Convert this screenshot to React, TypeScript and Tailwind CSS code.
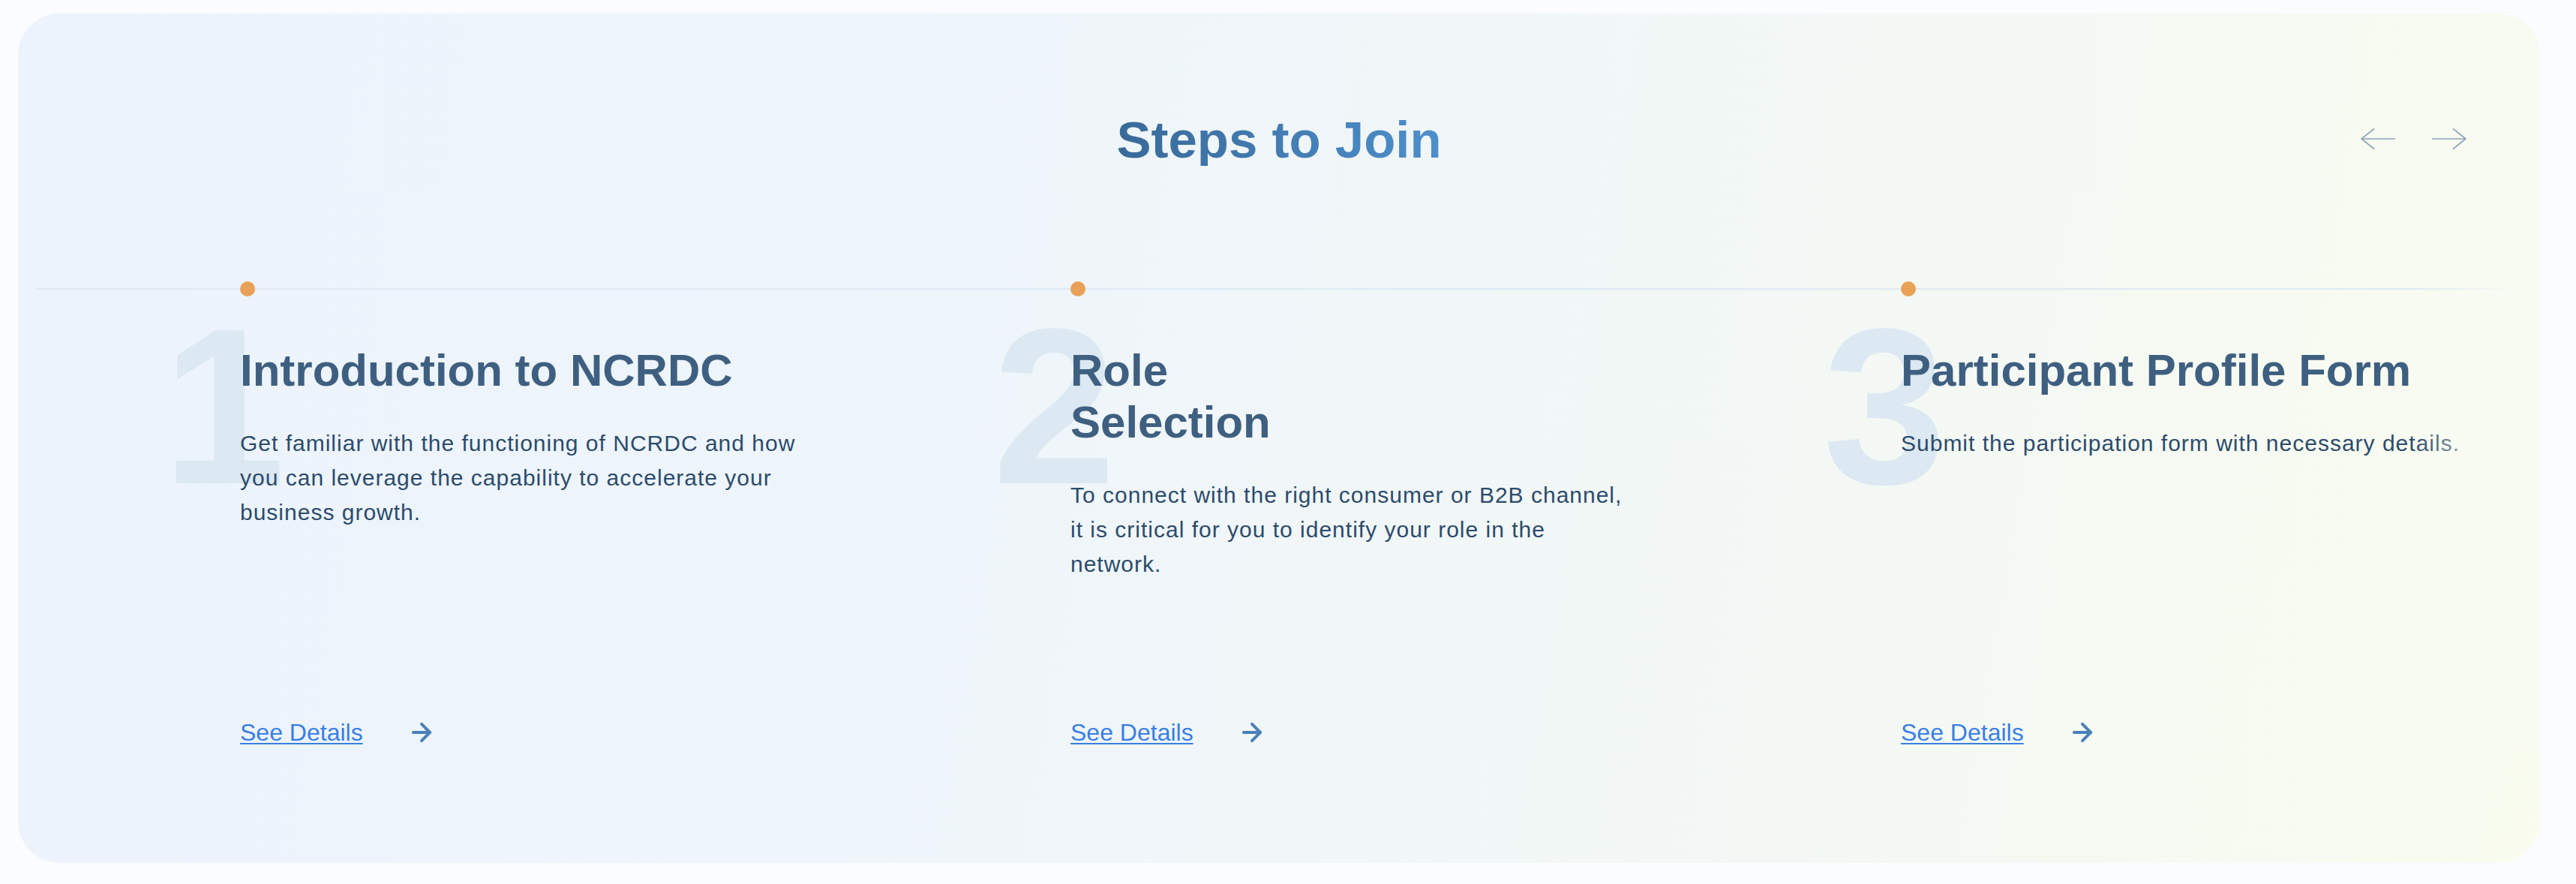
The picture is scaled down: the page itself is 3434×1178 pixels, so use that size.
import React from "react";
import { ArrowRight } from "lucide-react";

type Step = { n: string; title: React.ReactNode; body: string };

const steps: Step[] = [
  {
    n: "1",
    title: <>Introduction to NCRDC</>,
    body: "Get familiar with the functioning of NCRDC and how you can leverage the capability to accelerate your business growth.",
  },
  {
    n: "2",
    title: (
      <>
        Role
        <br />
        Selection
      </>
    ),
    body: "To connect with the right consumer or B2B channel, it is critical for you to identify your role in the network.",
  },
  {
    n: "3",
    title: <>Participant Profile Form</>,
    body: "Submit the participation form with necessary details.",
  },
];

function NavArrow({ dir }: { dir: "left" | "right" }) {
  return (
    <svg width="48" height="30" viewBox="0 0 48 30" fill="none" stroke="#8fa4b8" strokeWidth="1.6">
      {dir === "left" ? (
        <path d="M47 15H2 M19 1.5 L2 15 L19 28.5" />
      ) : (
        <path d="M1 15H46 M29 1.5 L46 15 L29 28.5" />
      )}
    </svg>
  );
}

function StepColumn({ step }: { step: Step }) {
  return (
    <div className="relative flex h-[620px] w-[1107px] shrink-0 flex-col">
      <div className="pointer-events-none absolute left-[-104px] top-[19px] select-none text-[296px] font-bold leading-none text-[#dce8f2]">
        {step.n}
      </div>
      <div className="relative h-5 w-5 rounded-full bg-[#e8a157]" />
      <h3 className="relative mt-[64px] text-[60px] font-bold leading-[69px] text-[#3e5f80]">
        {step.title}
      </h3>
      <p className="relative mt-[40px] max-w-[750px] text-[30px] leading-[46px] tracking-[1px] text-[#2c4b6c]">
        {step.body}
      </p>
      <div className="relative mt-auto flex items-center">
        <a
          href="#"
          className="text-[32px] leading-[1.2] text-[#3a7ee6] underline decoration-[2px] underline-offset-[3px]"
        >
          See Details
        </a>
        <ArrowRight size={38} strokeWidth={2.5} color="#4a80b8" className="ml-[59px]" />
      </div>
    </div>
  );
}

export default function App() {
  return (
    <div className="min-h-screen w-full bg-[#fafcff] pb-[28px] pl-[24px] pr-[48px] pt-[18px] font-['Liberation_Sans',Arial,sans-serif]">
      <div className="relative flex h-[1132px] flex-col overflow-hidden rounded-[56px] bg-[linear-gradient(100deg,#ecf3fd_0%,#eef5fb_35%,#f3f8f5_70%,#f9fcef_100%)]">
        <div className="relative flex justify-center pt-[134px]">
          <h2 className="bg-linear-to-r from-[#386a99] to-[#4e8fcc] bg-clip-text text-[69px] font-bold leading-none text-transparent">
            Steps to Join
          </h2>
          <div className="absolute right-[97px] top-[152px] flex items-center gap-[47px]">
            <button type="button" aria-label="Previous">
              <NavArrow dir="left" />
            </button>
            <button type="button" aria-label="Next">
              <NavArrow dir="right" />
            </button>
          </div>
        </div>

        <div className="relative mt-[154px] flex pl-[296px]">
          <div className="absolute left-[24px] right-0 top-[9px] h-[2px] bg-[#dde9f3]" />
          {steps.map((s) => (
            <StepColumn key={s.n} step={s} />
          ))}
          <div className="pointer-events-none absolute inset-y-0 right-0 z-20 w-[170px] bg-[linear-gradient(to_right,rgba(247,251,242,0)_0%,rgba(247,251,242,1)_82%)]" />
        </div>
      </div>
    </div>
  );
}
